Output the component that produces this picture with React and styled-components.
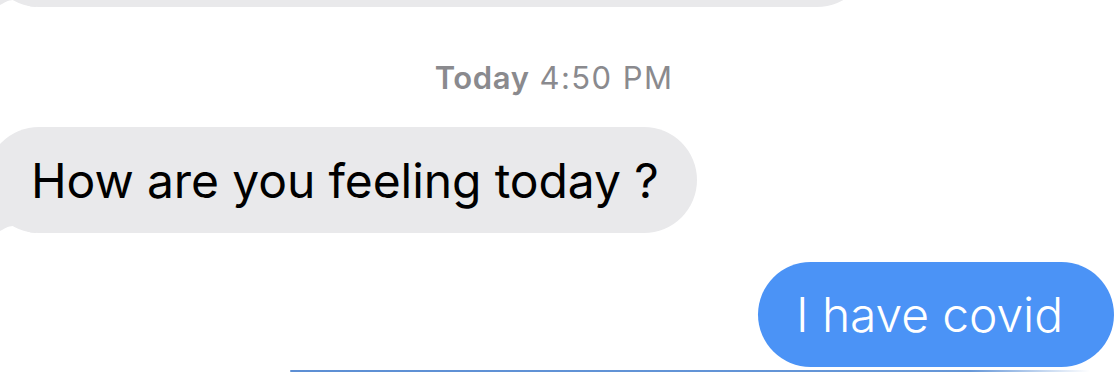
import styled, { createGlobalStyle } from 'styled-components';

const GlobalStyle = createGlobalStyle`
  html, body {
    margin: 0;
    padding: 0;
    background: #ffffff;
  }
`;

function Tail() {
  return (
    <TailMark viewBox="0 0 50 46" width="50" height="46" aria-hidden="true">
      <path d="M0 0 H50 V46 C46 46 43 45 41 44 C36 41 31 39 27 39 C22 39 18 42 14 44 L6 46 H0 Z" />
    </TailMark>
  );
}

export default function App() {
  return (
    <>
      <GlobalStyle />
      <Screen>
        <Thread>
          <Bubble $from="them" $width="884px" $pull="-99px" aria-hidden="true">
            <Tail />
          </Bubble>

          <Stamp>
            <strong>Today</strong> 4:50 PM
          </Stamp>

          <Bubble $from="them">
            <Tail />
            How are you feeling today ?
          </Bubble>

          <Bubble $from="me">I have covid</Bubble>
        </Thread>

        <NextCardEdge />
      </Screen>
    </>
  );
}

const Screen = styled.div`
  width: 1119px;
  height: 372px;
  overflow: hidden;
  position: relative;
  font-family: Inter, 'Noto Sans', 'Liberation Sans', sans-serif;
  background: #ffffff;
`;

const Thread = styled.div`
  display: flex;
  flex-direction: column;
`;

const Stamp = styled.div`
  align-self: center;
  margin: 52px 0 0 -11px;
  font-size: 31px;
  line-height: 38px;
  color: #8a8a8e;
  letter-spacing: 1.4px;

  strong {
    font-weight: 600;
    letter-spacing: 0.6px;
  }
`;

const Bubble = styled.div`
  position: relative;
  z-index: 0;
  box-sizing: border-box;
  display: flex;
  align-items: center;
  height: ${(p) => (p.$from === 'me' ? '105px' : '106px')};
  width: ${(p) => p.$width || 'auto'};
  margin-top: ${(p) => p.$pull || (p.$from === 'me' ? '29px' : '30px')};
  align-self: ${(p) => (p.$from === 'me' ? 'flex-end' : 'flex-start')};
  margin-left: ${(p) => (p.$from === 'me' ? '0' : '-14px')};
  margin-right: ${(p) => (p.$from === 'me' ? '5px' : '0')};
  padding: ${(p) => (p.$from === 'me' ? '0 51px 0 38px' : '0 38px 0 45px')};
  border-radius: 54px;
  background: ${(p) => (p.$from === 'me' ? '#4b93f6' : '#e9e9eb')};
  color: ${(p) => (p.$from === 'me' ? '#ffffff' : '#000000')};
  font-size: 48px;
  font-weight: ${(p) => (p.$from === 'me' ? 300 : 400)};
  letter-spacing: -0.1px;
  white-space: nowrap;
`;

const TailMark = styled.svg`
  position: absolute;
  z-index: -1;
  left: 0;
  bottom: 0;
  fill: #e9e9eb;
`;

const NextCardEdge = styled.div`
  position: absolute;
  left: 290px;
  bottom: 0;
  width: 800px;
  height: 2px;
  border-radius: 1px;
  background: linear-gradient(90deg, #5d8fd4 0%, #6697d8 85%, rgba(102, 151, 216, 0));
`;
